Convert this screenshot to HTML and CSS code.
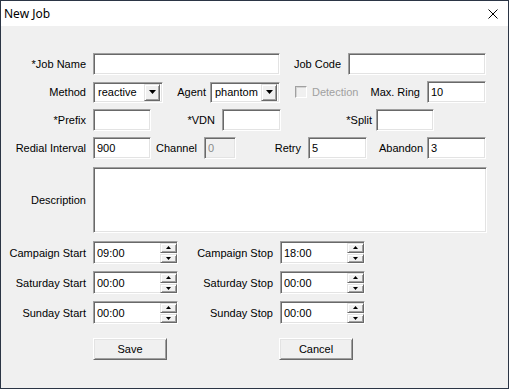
FILE: index.html
```html
<!DOCTYPE html>
<html lang="en">

<head>
  <meta charset="UTF-8">
  <meta name="viewport" content="width=device-width, initial-scale=1.0">
  <title>New Job</title>
  <link rel="stylesheet" href="styles.css">
</head>

<body>
  <div class="window">
    <div class="titlebar">
      <span class="title">New Job</span>
      <svg class="close" viewBox="0 0 10 10" width="10" height="10">
        <path d="M0.5 0.5 L9.5 9.5 M9.5 0.5 L0.5 9.5" stroke="#000" stroke-width="1" fill="none" />
      </svg>
    </div>

    <form class="client" id="jobForm">
      <div class="row row-1">
        <label class="lbl" for="jobName">*Job Name</label>
        <input class="edit" type="text" id="jobName">
        <label class="lbl" for="jobCode">Job Code</label>
        <input class="edit" type="text" id="jobCode">
      </div>

      <div class="row row-2">
        <label class="lbl">Method</label>
        <div class="combo">
          <span class="combo-text">reactive</span>
          <span class="drop"><svg viewBox="0 0 7 4" width="7" height="4"><path d="M0 0 H7 L3.5 4 Z" fill="#000" /></svg></span>
        </div>
        <label class="lbl lbl-tight">Agent</label>
        <div class="combo">
          <span class="combo-text">phantom</span>
          <span class="drop"><svg viewBox="0 0 7 4" width="7" height="4"><path d="M0 0 H7 L3.5 4 Z" fill="#000" /></svg></span>
        </div>
        <div class="check">
          <span class="box"></span>
          <span>Detection</span>
        </div>
        <label class="lbl" for="maxRing">Max. Ring</label>
        <input class="edit" type="text" id="maxRing" value="10">
      </div>

      <div class="row row-3">
        <label class="lbl" for="prefix">*Prefix</label>
        <input class="edit" type="text" id="prefix">
        <label class="lbl" for="vdn">*VDN</label>
        <input class="edit" type="text" id="vdn">
        <label class="lbl lbl-tight" for="split">*Split</label>
        <input class="edit" type="text" id="split">
      </div>

      <div class="row row-4">
        <label class="lbl" for="redial">Redial Interval</label>
        <input class="edit" type="text" id="redial" value="900">
        <label class="lbl" for="channel">Channel</label>
        <input class="edit" type="text" id="channel" value="0" disabled>
        <label class="lbl" for="retry">Retry</label>
        <input class="edit" type="text" id="retry" value="5">
        <label class="lbl lbl-tight" for="abandon">Abandon</label>
        <input class="edit" type="text" id="abandon" value="3">
      </div>

      <div class="row row-desc">
        <label class="lbl" for="description">Description</label>
        <textarea class="edit memo" id="description"></textarea>
      </div>

      <div class="row row-time first-time">
        <label class="lbl">Campaign Start</label>
        <div class="spin">
          <input class="edit" type="text" value="09:00">
          <div class="spin-btns">
            <span class="spin-btn"><svg viewBox="0 0 5 3" width="5" height="3"><path d="M2.5 0 L5 3 H0 Z" fill="#000" /></svg></span>
            <span class="spin-btn"><svg viewBox="0 0 5 3" width="5" height="3"><path d="M0 0 H5 L2.5 3 Z" fill="#000" /></svg></span>
          </div>
        </div>
        <label class="lbl">Campaign Stop</label>
        <div class="spin">
          <input class="edit" type="text" value="18:00">
          <div class="spin-btns">
            <span class="spin-btn"><svg viewBox="0 0 5 3" width="5" height="3"><path d="M2.5 0 L5 3 H0 Z" fill="#000" /></svg></span>
            <span class="spin-btn"><svg viewBox="0 0 5 3" width="5" height="3"><path d="M0 0 H5 L2.5 3 Z" fill="#000" /></svg></span>
          </div>
        </div>
      </div>

      <div class="row row-time">
        <label class="lbl">Saturday Start</label>
        <div class="spin">
          <input class="edit" type="text" value="00:00">
          <div class="spin-btns">
            <span class="spin-btn"><svg viewBox="0 0 5 3" width="5" height="3"><path d="M2.5 0 L5 3 H0 Z" fill="#000" /></svg></span>
            <span class="spin-btn"><svg viewBox="0 0 5 3" width="5" height="3"><path d="M0 0 H5 L2.5 3 Z" fill="#000" /></svg></span>
          </div>
        </div>
        <label class="lbl">Saturday Stop</label>
        <div class="spin">
          <input class="edit" type="text" value="00:00">
          <div class="spin-btns">
            <span class="spin-btn"><svg viewBox="0 0 5 3" width="5" height="3"><path d="M2.5 0 L5 3 H0 Z" fill="#000" /></svg></span>
            <span class="spin-btn"><svg viewBox="0 0 5 3" width="5" height="3"><path d="M0 0 H5 L2.5 3 Z" fill="#000" /></svg></span>
          </div>
        </div>
      </div>

      <div class="row row-time">
        <label class="lbl">Sunday Start</label>
        <div class="spin">
          <input class="edit" type="text" value="00:00">
          <div class="spin-btns">
            <span class="spin-btn"><svg viewBox="0 0 5 3" width="5" height="3"><path d="M2.5 0 L5 3 H0 Z" fill="#000" /></svg></span>
            <span class="spin-btn"><svg viewBox="0 0 5 3" width="5" height="3"><path d="M0 0 H5 L2.5 3 Z" fill="#000" /></svg></span>
          </div>
        </div>
        <label class="lbl">Sunday Stop</label>
        <div class="spin">
          <input class="edit" type="text" value="00:00">
          <div class="spin-btns">
            <span class="spin-btn"><svg viewBox="0 0 5 3" width="5" height="3"><path d="M2.5 0 L5 3 H0 Z" fill="#000" /></svg></span>
            <span class="spin-btn"><svg viewBox="0 0 5 3" width="5" height="3"><path d="M0 0 H5 L2.5 3 Z" fill="#000" /></svg></span>
          </div>
        </div>
      </div>

      <div class="row row-buttons">
        <span></span>
        <button class="btn" type="button">Save</button>
        <span></span>
        <button class="btn" type="button">Cancel</button>
      </div>
    </form>
  </div>
</body>

</html>
```

FILE: styles.css
```css
* {
  box-sizing: border-box;
}

body {
  margin: 0;
  background-color: #f0f0f0;
  font-family: "Liberation Sans", Tahoma, Arial, sans-serif;
  font-size: 11px;
  color: #000;
}

.window {
  width: 509px;
  height: 389px;
  border: 1px solid #2b3545;
  background-color: #f0f0f0;
  display: flex;
  flex-direction: column;
}

.titlebar {
  height: 25px;
  flex: none;
  background-color: #fff;
  display: flex;
  align-items: center;
  justify-content: space-between;
  padding: 0 10px 0 3px;
}

.title {
  font-family: "Noto Sans", "Open Sans", sans-serif;
  font-size: 12px;
}

.close {
  display: block;
}

.client {
  margin: 0;
  padding-top: 27px;
}

/* rows */
.row {
  display: grid;
  height: 22px;
  align-items: center;
  margin-top: 6px;
}

.row-1 {
  margin-top: 0;
  grid-template-columns: 92px 187px 68px 138px;
}

.row-2 {
  grid-template-columns: 92px 70px 47px 70px 85px 62px 59px;
}

.row-3 {
  grid-template-columns: 92px 58px 71px 59px 95px 58px;
}

.row-4 {
  grid-template-columns: 92px 58px 53px 32px 72px 59px 60px 59px;
}

.row-desc {
  height: 66px;
  margin-top: 8px;
  grid-template-columns: 92px 394px;
}

.row-time {
  height: 23px;
  margin-top: 7px;
  grid-template-columns: 92px 85px 102px 85px;
}

.first-time {
  margin-top: 8px;
}

.row-buttons {
  margin-top: 14px;
  grid-template-columns: 92px 74px 112px 74px;
}

.lbl {
  text-align: right;
  padding-right: 7px;
  white-space: nowrap;
}

.lbl-tight {
  padding-right: 4px;
}

/* sunken edit */
.edit {
  display: block;
  width: 100%;
  height: 22px;
  margin: 0;
  padding: 0 3px;
  border: 1px solid;
  border-color: #a0a0a0 #fff #fff #a0a0a0;
  box-shadow: inset 1px 1px #696969, inset -1px -1px #e3e3e3;
  background-color: #fff;
  font: inherit;
  color: #000;
  outline: none;
}

.edit:disabled {
  background-color: #f0f0f0;
  color: #8a8a8a;
}

.memo {
  height: 66px;
  resize: none;
}

/* combo box */
.combo {
  height: 21px;
  display: flex;
  align-items: center;
  justify-content: space-between;
  padding: 2px;
  border: 1px solid;
  border-color: #a0a0a0 #fff #fff #a0a0a0;
  box-shadow: inset 1px 1px #696969, inset -1px -1px #e3e3e3;
  background-color: #fff;
}

.combo-text {
  padding-left: 2px;
}

.drop {
  width: 16px;
  height: 17px;
  display: flex;
  align-items: center;
  justify-content: center;
  border: 1px solid;
  border-color: #e3e3e3 #696969 #696969 #e3e3e3;
  box-shadow: inset 1px 1px #fff, inset -1px -1px #a0a0a0;
  background-color: #f0f0f0;
}

.drop svg,
.spin-btn svg {
  display: block;
}

/* disabled check box */
.check {
  display: flex;
  align-items: center;
  gap: 5px;
  padding-left: 15px;
  color: #a0a0a0;
}

.box {
  width: 12px;
  height: 12px;
  border: 1px solid;
  border-color: #a0a0a0 #fff #fff #a0a0a0;
  box-shadow: inset 1px 1px #d4d4d4;
  background-color: #f0f0f0;
}

/* spinner */
.spin {
  position: relative;
  height: 23px;
}

.spin .edit {
  height: 23px;
}

.spin-btns {
  position: absolute;
  top: 2px;
  right: 1px;
  width: 17px;
  height: 20px;
  display: flex;
  flex-direction: column;
  gap: 1px;
}

.spin-btn {
  flex: 1;
  display: flex;
  align-items: center;
  justify-content: center;
  border: 1px solid;
  border-color: #e3e3e3 #696969 #696969 #e3e3e3;
  box-shadow: inset 1px 1px #fff, inset -1px -1px #a0a0a0;
  background-color: #f0f0f0;
}

/* push buttons */
.btn {
  height: 22px;
  width: 100%;
  margin: 0;
  border: 1px solid;
  border-color: #fff #696969 #696969 #fff;
  box-shadow: inset 1px 1px #e3e3e3, inset -1px -1px #a0a0a0;
  background-color: #f0f0f0;
  font: inherit;
  color: #000;
}
```
